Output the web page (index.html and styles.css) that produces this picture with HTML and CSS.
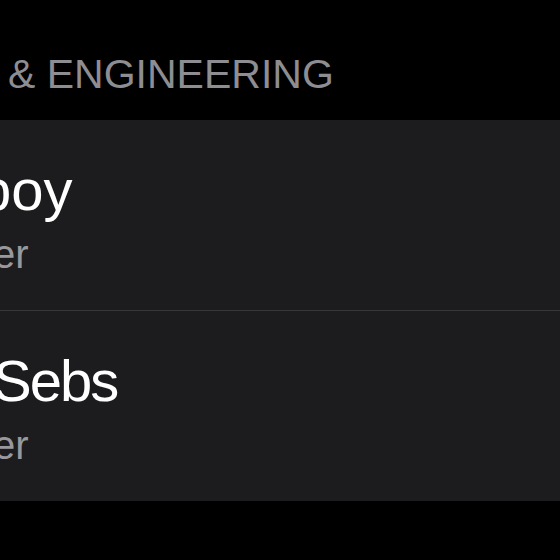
FILE: index.html
```html
<!DOCTYPE html>
<html lang="en">
<head>
  <meta charset="UTF-8" />
  <title>Team</title>
  <meta name="viewport" content="width=device-width, initial-scale=1" />
  <link rel="stylesheet" href="styles.css">
</head>
<body>

  <div class="screen">
    <h2 class="section-title">&amp; ENGINEERING</h2>

    <ul class="list">
      <li class="row">
        <span class="name name-first">boy</span>
        <span class="role">er</span>
      </li>
      <li class="row">
        <span class="name name-second">Sebs</span>
        <span class="role">er</span>
      </li>
    </ul>
  </div>

</body>
</html>
```

FILE: styles.css
```css
html, body {
  margin: 0;
  background-color: #000;
  overflow: hidden;
}

body {
  font-family: "Liberation Sans", Arial, sans-serif;
}

.screen {
  width: 560px;
  height: 560px;
  overflow: hidden;
}

.section-title {
  margin: 50px 0 22px;
  padding-left: 8px;
  font-size: 41px;
  line-height: 48px;
  font-weight: normal;
  color: #8d8d92;
  white-space: nowrap;
}

.list {
  list-style: none;
  margin: 0;
  padding: 0 0 1px;
  background-color: #1c1c1e;
}

.row {
  display: flex;
  flex-direction: column;
  height: 190px;
  box-sizing: border-box;
  padding-top: 38px;
  white-space: nowrap;
}

.row + .row {
  border-top: 1px solid #38383a;
}

.name {
  font-size: 58px;
  line-height: 64px;
  color: #fff;
}

.name-first {
  margin-left: -21px;
}

.name-second {
  margin-left: -7px;
  letter-spacing: -2px;
}

.role {
  margin-top: 8px;
  margin-left: -7px;
  font-size: 40px;
  line-height: 48px;
  color: #98989d;
}
```
